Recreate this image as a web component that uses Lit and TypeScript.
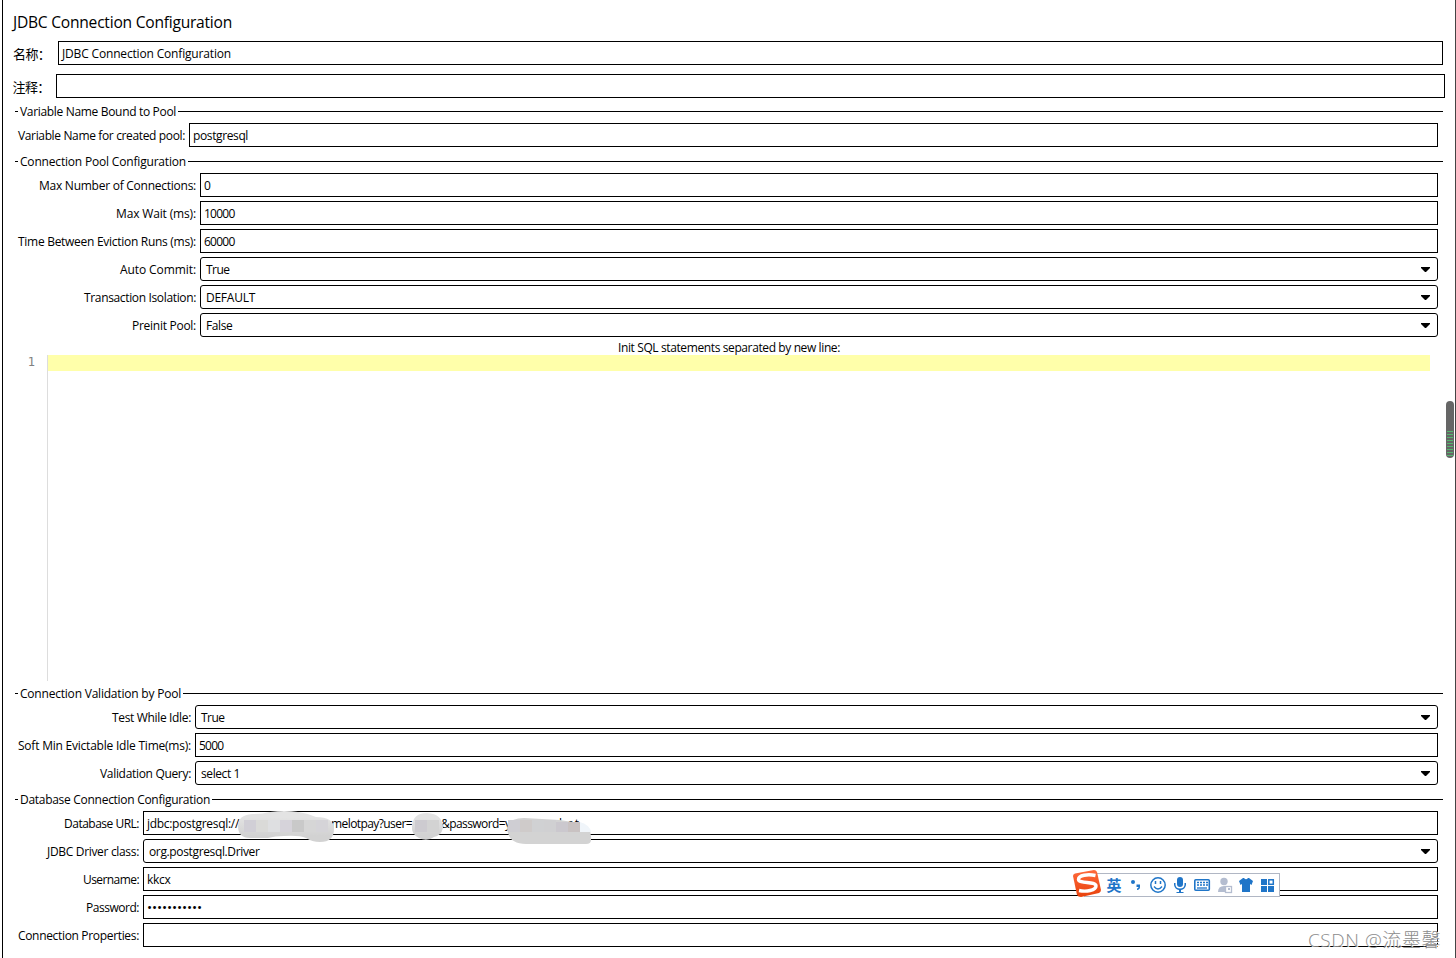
import { LitElement, html, css, svg, nothing } from "lit";
import { customElement, property } from "lit/decorators.js";

/** Single line of text whose tracking is adjusted to fill a given width. */
@customElement("fit-text")
class FitText extends LitElement {
  @property({ type: Number }) w = 0;
  @property() text = "";
  static styles = css`
    :host { display: inline-block; white-space: pre; }
    .t { display: inline-block; white-space: pre; }
  `;
  render() {
    return html`<span class="t">${this.text}</span>`;
  }
  updated() {
    const s = this.renderRoot.querySelector(".t") as HTMLElement;
    s.style.letterSpacing = "0px";
    if (!this.w) return;
    const n = this.text.length;
    const d = (this.w - s.getBoundingClientRect().width) / n;
    s.style.letterSpacing = d.toFixed(4) + "px";
  }
}

type Row = { label: string; lw: number; value: string; vw: number; combo?: boolean; kind?: string };

const bound: Row[] = [
  { label: "Variable Name for created pool:", lw: 167, value: "postgresql", vw: 55 },
];
const pool: Row[] = [
  { label: "Max Number of Connections:", lw: 157, value: "0", vw: 6 },
  { label: "Max Wait (ms):", lw: 80, value: "10000", vw: 30.5 },
  { label: "Time Between Eviction Runs (ms):", lw: 178, value: "60000", vw: 30.5 },
  { label: "Auto Commit:", lw: 76, value: "True", vw: 23.5, combo: true },
  { label: "Transaction Isolation:", lw: 112, value: "DEFAULT", vw: 49, combo: true },
  { label: "Preinit Pool:", lw: 64, value: "False", vw: 26.5, combo: true },
];
const validation: Row[] = [
  { label: "Test While Idle:", lw: 79, value: "True", vw: 23.5, combo: true },
  { label: "Soft Min Evictable Idle Time(ms):", lw: 173, value: "5000", vw: 24.5 },
  { label: "Validation Query:", lw: 91, value: "select 1", vw: 39, combo: true },
];
const database: Row[] = [
  { label: "Database URL:", lw: 75, value: "", vw: 0, kind: "url" },
  { label: "JDBC Driver class:", lw: 92, value: "org.postgresql.Driver", vw: 110.5, combo: true },
  { label: "Username:", lw: 56, value: "kkcx", vw: 23.5 },
  { label: "Password:", lw: 53, value: "•••••••••••", vw: 55, kind: "dots" },
  { label: "Connection Properties:", lw: 121, value: "", vw: 0 },
];

const cells = (x: number, y: number, w: number, h: number, colors: string[]) =>
  colors.map((c, i) => svg`<rect x=${x + i * w} y=${y} width=${w} height=${h} fill=${c}></rect>`);

@customElement("app-root")
class AppRoot extends LitElement {
  static styles = css`
    :host {
      display: block;
      height: 958px;
      overflow: hidden;
      background: #fff;
      color: #000;
      font: 12px/24px "Open Sans", "Noto Sans", "Noto Sans CJK SC", sans-serif;
      font-stretch: 93%;
    }
    * { box-sizing: border-box; }
    .panel {
      position: relative;
      height: 958px;
      margin-left: 2px;
      border-left: 1px solid #000;
      border-right: 1px solid #444;
      padding: 8px 12px 0 10px;
      overflow: hidden;
    }
    .title { height: 33px; font-size: 15.6px; line-height: 29px; }
    .top { display: flex; height: 24px; margin-bottom: 9px; }
    .top.wide { margin-right: -2px; margin-bottom: 0; }
    .cap { width: 45px; font: 13px/25px "Noto Sans CJK SC", sans-serif; margin-left: -1px; padding-left: 0; }
    .top .cap { width: 46px; letter-spacing: -0.6px; padding-left: 1px; }
    .top.wide .cap { width: 44px; padding-left: 0.5px; }
    .box {
      flex: 1;
      min-width: 0;
      height: 24px;
      border: 1px solid #000;
      padding-left: 3px;
      line-height: 23px;
      white-space: pre;
      display: flex;
      position: relative;
      background: #fff;
    }
    .combo { border-radius: 3px; padding-left: 5px; }
    .arrow { position: absolute; right: 7px; top: 9px; width: 9px; height: 5px; display: block; }
    .legend { display: flex; height: 25px; padding-left: 2px; line-height: 27px; }
    .legend::before { content: ""; width: 3px; height: 1px; background: #000; margin: 13px 2px 0 0; }
    .legend::after { content: ""; flex: 1; height: 1px; background: #000; margin: 13px 0 0 2px; }
    .grid {
      display: grid;
      row-gap: 4px;
      column-gap: 4px;
      margin: 0 5px 1px 5px;
    }
    .c-bound { grid-template-columns: 167px 1fr; }
    .c-pool { grid-template-columns: 178px 1fr; }
    .c-val { grid-template-columns: 173px 1fr; }
    .c-db { grid-template-columns: 121px 1fr; }
    .lab { text-align: right; height: 24px; line-height: 25px; white-space: pre; }
    .lab fit-text { vertical-align: top; }
    .init { height: 17px; line-height: 19px; padding-left: 605px; }
    .editor { display: flex; height: 326px; margin: 0 13px -1px 0; }
    .gutter {
      width: 35px;
      border-right: 1px solid #ddd;
      font: 12px/14px "DejaVu Sans Mono", "Liberation Mono", monospace;
      color: #808080;
      text-align: right;
      padding-right: 12px;
    }
    .line { flex: 1; height: 16px; background: #ffffaa; }
    .dots { font-size: 13.5px; }
    .mask { position: absolute; left: -1px; top: -2px; width: 460px; height: 34px; z-index: 2; display: block; }
    .gap1 { width: 92px; }
    .gap2 { width: 29px; }
    .gap3 { width: 48px; }
    .scroll {
      position: absolute;
      right: 1px;
      top: 401px;
      width: 8px;
      height: 57px;
      border-radius: 4px;
      background: #666;
      overflow: hidden;
    }
    .scroll::after {
      content: "";
      position: absolute;
      left: 1px;
      right: 1px;
      top: 30px;
      bottom: 2px;
      background: repeating-linear-gradient(#55b56f 0 1px, #666 1px 3px);
    }
    .ime { position: absolute; left: 1069px; top: 868px; width: 210px; height: 32px; display: block; z-index: 3; }
    .ime text { font: 700 15px "Noto Sans CJK SC", sans-serif; }
    .mark {
      position: absolute;
      left: 1305px;
      top: 927px;
      font: 19px/26px "Open Sans", "Noto Sans CJK SC", sans-serif;
      font-weight: 300;
      color: #8c8c8c;
      text-shadow: 1px 1px 0 #fff;
      z-index: 4;
    }
  `;

  field(r: Row) {
    if (r.kind === "url")
      return html`<div class="box"><fit-text w="92" text="jdbc:postgresql://"></fit-text><span class="gap1"></span><fit-text w="81" text="melotpay?user="></fit-text><span class="gap2"></span><fit-text w="64" text="&password="></fit-text><fit-text w="6" text="y"></fit-text><span class="gap3"></span><fit-text w="21" text="bet"></fit-text>${this.mask()}</div>`;
    return html`<div class="box ${r.combo ? "combo" : ""} ${r.kind ?? ""}">${r.value
        ? html`<fit-text w=${r.vw} text=${r.value}></fit-text>`
        : nothing}${r.combo
        ? html`<svg class="arrow" viewBox="0 0 9 5"><path d="M0 0H9V1L5 5H4L0 1Z" /></svg>`
        : nothing}</div>`;
  }

  mask() {
    return html`<svg class="mask" viewBox="143 810 460 34">
      <defs><linearGradient id="m" x1="0" y1="0" x2="0" y2="1"><stop offset="0.2" stop-color="#e3e3e3" /><stop offset="0.8" stop-color="#d2d2d2" /></linearGradient></defs>
      <path d="M252 814Q262 814 270 812Q285 810 298 812Q307 813 316 817Q334 817 334 829Q334 842 320 842Q312 842 306 838Q299 835 284 836Q275 836 268 838H250Q238 838 238 826Q238 815 252 814Z" fill="url(#m)" />
      ${cells(244, 820, 12, 12, ["#d1cfd6", "#dadad8", "#dedfe1", "#d6d3da", "#c9c9c9", "#d6d6d6", "#d5d4d8"])}
      <path d="M427 813Q443 814 443 828Q441 836 434 837Q427 842 419 838Q411 834 412 826Q413 813 427 813Z" fill="url(#m)" />
      ${cells(415, 820, 12, 12, ["#cdcbd0", "#d3d3d3"])}
      <path d="M507 828Q509 818 524 818L560 820L584 824Q592 829 591 840Q591 844 586 844H526Q508 844 507 828Z" fill="#d3d3d3" />
      ${cells(508, 820, 12, 12, ["#cfced3", "#cfcbca", "#d0d1d3", "#d0d0d2"])}
      ${cells(556, 822, 12, 10, ["#cbc8ce", "#c9c2c2"])}
      <path d="M580 822Q590 825 591 832H580Z" fill="#f0f5fa" />
    </svg>`;
  }

  group(title: string, w: number, cls: string, rows: Row[]) {
    return html`<div class="legend"><fit-text w=${w} text=${title}></fit-text></div>
      <div class="grid ${cls}">
        ${rows.map((r) => html`<div class="lab"><fit-text w=${r.lw} text=${r.label}></fit-text></div>${this.field(r)}`)}
      </div>`;
  }

  ime() {
    return html`<svg class="ime" viewBox="1072 868 210 32">
      <rect x="1084.5" y="873.5" width="195" height="23" fill="#fff" stroke="#b1b7c4" />
      <defs><linearGradient id="g" x1="0" y1="0" x2="0" y2="1"><stop offset="0" stop-color="#ff6a3c" /><stop offset="1" stop-color="#e8420c" /></linearGradient></defs>
      <path d="M1075 873.500L1094 870Q1096 870 1097 872L1101 890Q1101 892 1099 893L1081 897Q1078 897 1077 895L1073 876Q1073 874 1075 873.500Z" fill="url(#g)" />
      <path d="M1095.500 875.500C1088 874 1078.500 875 1078.500 879.500C1079 884 1096 881 1096 886C1096 890.500 1086 892 1079 890.500" fill="none" stroke="#fff" stroke-width="3.4" />
      <text x="1106.5" y="890.5" fill="#1f75c8">英</text>
      <g fill="#1f75c8">
        <circle cx="1133" cy="882" r="2" />
        <path d="M1136.500 884.500H1140V887Q1140 889.500 1137 890V888.500Q1138.500 888 1138.500 887H1136.500Z" />
        <rect x="1177" y="877" width="6" height="10" rx="3" />
        <path d="M1174 883V885Q1175 889.500 1179 890V892H1176.500V893H1183.500V892H1181V890Q1185 889.500 1186 885V883H1184.500V885Q1184 888.500 1180 888.500Q1176 888.500 1175.500 885V883Z" />
        <path d="M1239 881L1243 878H1244Q1246 880.500 1248 878H1249L1253 881L1251.500 885L1250 884V892H1242V884L1240.500 885Z" />
        <rect x="1261" y="879" width="6" height="6" /><rect x="1261" y="886" width="6" height="6" /><rect x="1268" y="886" width="6" height="6" />
      </g>
      <g fill="none" stroke="#1f75c8">
        <circle cx="1158" cy="885" r="7.2" stroke-width="1.500" />
        <path d="M1154 886.500Q1158 891.500 1162 886.500" stroke-width="1.300" />
        <path d="M1155.500 881V884M1160.500 881V884" stroke-width="1.500" />
        <rect x="1194.800" y="879.800" width="14.500" height="10.500" rx="1" stroke-width="1.600" />
        <path d="M1197 882.500H1208M1197 885H1208" stroke-width="1.400" stroke-dasharray="2 1" />
        <path d="M1197 888H1207" stroke-width="1.300" />
        <rect x="1268.800" y="879.800" width="4.500" height="4.500" stroke-width="1.500" />
      </g>
      <g fill="#b4bdd0">
        <circle cx="1224" cy="881.500" r="3.700" />
        <path d="M1218 892Q1218 886 1224 886L1227 886V892Z" />
        <rect x="1225.500" y="886.500" width="6" height="6" fill="#fff" stroke="#b4bdd0" stroke-width="1.300" />
        <path d="M1228 888H1230V890H1228Z" />
      </g>
    </svg>`;
  }

  render() {
    return html`<div class="panel">
      <div class="title"><fit-text w="219" text="JDBC Connection Configuration"></fit-text></div>
      <div class="top"><div class="cap">名称：</div><div class="box"><fit-text w="169" text="JDBC Connection Configuration"></fit-text></div></div>
      <div class="top wide"><div class="cap">注释：</div><div class="box"></div></div>
      ${this.group("Variable Name Bound to Pool", 156, "c-bound", bound)}
      ${this.group("Connection Pool Configuration", 166, "c-pool", pool)}
      <div class="init"><fit-text w="222" text="Init SQL statements separated by new line:"></fit-text></div>
      <div class="editor"><div class="gutter">1</div><div class="line"></div></div>
      ${this.group("Connection Validation by Pool", 161, "c-val", validation)}
      ${this.group("Database Connection Configuration", 190, "c-db", database)}
      <div class="scroll"></div>
      ${this.ime()}
      <div class="mark"><fit-text w="133" text="CSDN @流墨馨"></fit-text></div>
    </div>`;
  }
}
